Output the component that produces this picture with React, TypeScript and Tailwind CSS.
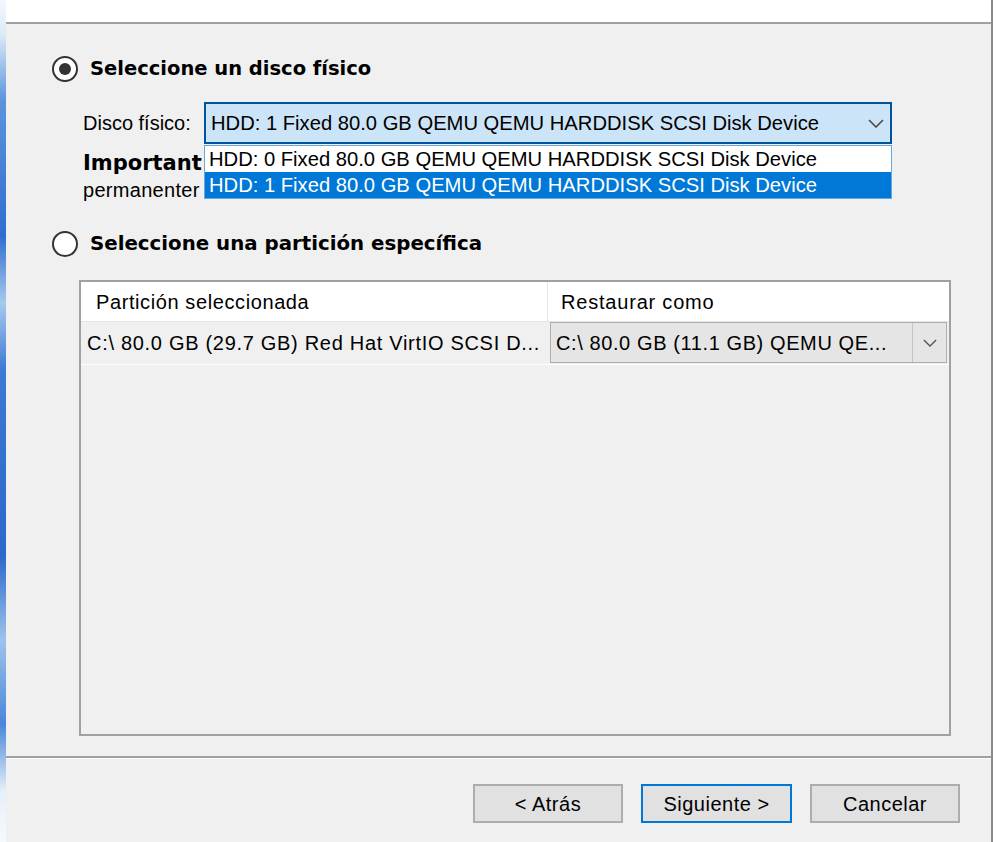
import * as React from "react"

const bodyFont = "font-['Liberation_Sans',Arial,sans-serif] text-[20px] text-black"
const boldFont = "font-['DejaVu_Sans',Verdana,sans-serif] font-bold text-black"

function Chevron({ className }: { className?: string }) {
  return (
    <svg viewBox="0 0 16 9" className={className} fill="none" stroke="currentColor" strokeWidth={1.5}>
      <polyline points="1,1 8,8 15,1" />
    </svg>
  )
}

function Radio({ checked }: { checked?: boolean }) {
  return (
    <span className="flex h-[26px] w-[26px] shrink-0 items-center justify-center rounded-full border-2 border-[#333333] bg-white">
      {checked && <span className="h-[12px] w-[12px] rounded-full bg-[#333333]" />}
    </span>
  )
}

const disks = [
  "HDD: 0 Fixed 80.0 GB QEMU QEMU HARDDISK SCSI Disk Device",
  "HDD: 1 Fixed 80.0 GB QEMU QEMU HARDDISK SCSI Disk Device",
]

function DiskCombo() {
  const selected = 1
  return (
    <div className="relative h-[42px] w-[688px] text-[20.2px]">
      <div className="flex h-full w-full items-center border-2 border-[#005499] bg-[#cce4f7] pl-[5px] pr-[6px]">
        <span className="flex-1 truncate">{disks[selected]}</span>
        <Chevron className="h-[9px] w-[16px] text-[#444444]" />
      </div>
      <div className="absolute left-0 top-[43px] z-10 w-[688px] border border-[#6aa5e4] bg-white">
        {disks.map((disk, i) => (
          <div
            key={disk}
            className={
              i === selected
                ? "flex h-[26px] items-center bg-[#0078d7] pl-[4px] text-white"
                : "flex h-[26px] items-center bg-white pl-[4px] text-black"
            }
          >
            {disk}
          </div>
        ))}
      </div>
    </div>
  )
}

function PartitionTable() {
  return (
    <div className="ml-[27px] mt-[22px] flex h-[456px] w-[872px] flex-col border-2 border-[#a0a0a0] bg-[#f0f0f0] tracking-[0.6px]">
      <div className="flex h-[40px] shrink-0 border-b border-[#e5e5e5] bg-white">
        <div className="flex w-[467px] items-center border-r border-[#e5e5e5] pl-[15px]">
          Partición seleccionada
        </div>
        <div className="flex flex-1 items-center pl-[13px] tracking-[0.8px]">Restaurar como</div>
      </div>
      <div className="flex h-[43px] shrink-0 border-b border-white">
        <div className="flex w-[468px] items-center pl-[6px] tracking-[0.7px]">
          {"C:\\ 80.0 GB (29.7 GB) Red Hat VirtIO SCSI D..."}
        </div>
        <div className="ml-[1px] flex h-[41px] w-[397px] items-center border border-[#adadad] bg-[#e5e5e5]">
          <span className="flex-1 pl-[5px]">{"C:\\ 80.0 GB (11.1 GB) QEMU QE..."}</span>
          <span className="flex h-full w-[34px] items-center justify-center border-l border-[#c4c4c4]">
            <Chevron className="h-[8px] w-[14px] text-[#555555]" />
          </span>
        </div>
      </div>
    </div>
  )
}

export default function App() {
  return (
    <div className={`flex h-[842px] w-[996px] overflow-hidden bg-white ${bodyFont}`}>
      <div className="w-[6px] shrink-0 bg-[linear-gradient(180deg,#f2f8fd_0%,#dcebf8_4%,#5b93dc_12%,#2f6fcf_28%,#a9c9ee_36%,#3b79d3_44%,#2c69ca_66%,#9fc2ec_76%,#4a86d8_86%,#e6f0fa_94%,#f6fafd_100%)]" />
      <div className="flex w-[987px] shrink-0 flex-col border-r-2 border-[#8c8c8c]">
        <div className="h-[24px] shrink-0 border-b-2 border-[#a0a0a0] bg-white" />

        <div className="flex h-[732px] shrink-0 flex-col bg-[#f0f0f0] pl-[46px] pt-[31px]">
          <label className="flex h-[28px] items-center gap-[12px]">
            <Radio checked />
            <span className={`${boldFont} text-[19.5px]`}>Seleccione un disco físico</span>
          </label>

          <div className="ml-[31px] mt-[19px] flex items-center">
            <span className="w-[121px] shrink-0">Disco físico:</span>
            <DiskCombo />
          </div>

          <div className="ml-[31px] mt-[6px] w-[121px] overflow-hidden whitespace-nowrap leading-[27px]">
            <div className={`${boldFont} text-[21px]`}>Important</div>
            <div className="tracking-[0.3px]">permanenter</div>
          </div>

          <label className="mt-[26px] flex h-[28px] items-center gap-[12px]">
            <Radio />
            <span className={`${boldFont} text-[19.8px]`}>Seleccione una partición específica</span>
          </label>

          <PartitionTable />
        </div>

        <div className="h-[2px] shrink-0 bg-[#a0a0a0]" />
        <div className="h-[1px] shrink-0 bg-white" />

        <div className="flex flex-1 items-start justify-end gap-[18px] bg-[#f0f0f0] pr-[31px] pt-[25px] tracking-[0.5px]">
          <button type="button" className="h-[39px] w-[150px] border-2 border-[#adadad] bg-[#e1e1e1]">
            {"< Atrás"}
          </button>
          <button type="button" className="h-[39px] w-[151px] border-2 border-[#0078d7] bg-[#e1e1e1]">
            {"Siguiente >"}
          </button>
          <button type="button" className="h-[39px] w-[150px] border-2 border-[#adadad] bg-[#e1e1e1]">
            Cancelar
          </button>
        </div>
      </div>
    </div>
  )
}
